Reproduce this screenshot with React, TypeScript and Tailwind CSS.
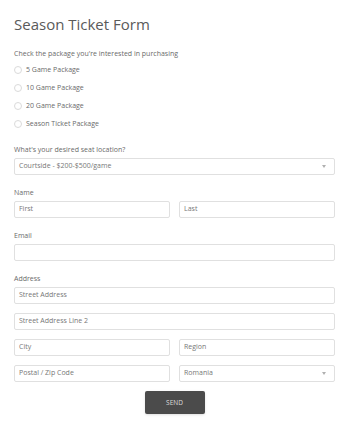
import React from 'react';

const font = { fontFamily: '"Open Sans", "Liberation Sans", sans-serif' };

const Field = ({ placeholder, className = '' }: { placeholder: string; className?: string }) => (
  <div
    className={`h-[17px] border border-[#e0e0e0] rounded-[2px] bg-white flex items-center px-[4px] text-[7px] text-[#777] ${className}`}
  >
    {placeholder}
  </div>
);

const Select = ({ value, className = '' }: { value: string; className?: string }) => (
  <div
    className={`h-[17px] border border-[#e0e0e0] rounded-[2px] bg-white flex items-center justify-between pl-[4px] pr-[8px] text-[7px] text-[#777] ${className}`}
  >
    <span>{value}</span>
    <span className="w-0 h-0 border-l-[2.5px] border-r-[2.5px] border-t-[3px] border-l-transparent border-r-transparent border-t-[#b0b0b0]" />
  </div>
);

const Label = ({ children }: { children: React.ReactNode }) => (
  <div className="h-[10px] leading-[10px] text-[7px] text-[#6a6a6a] mb-[3px]">{children}</div>
);

const packages = ['5 Game Package', '10 Game Package', '20 Game Package', 'Season Ticket Package'];

export default function App() {
  return (
    <div style={font} className="w-[350px] h-[427px] bg-white pl-[14px] pr-[15px] pt-[14px]">
      <h1 className="text-[15px] leading-[20px] text-[#5a5a5a] font-normal">Season Ticket Form</h1>

      <div className="mt-[15px] h-[10px] leading-[10px] text-[7px] text-[#6a6a6a]">
        Check the package you're interested in purchasing
      </div>
      <div className="mt-[2px] flex flex-col">
        {packages.map((p) => (
          <div key={p} className="h-[18px] flex items-center gap-[4px]">
            <span className="w-[8px] h-[8px] rounded-full border border-[#dadada] bg-white" />
            <span className="text-[7px] text-[#6a6a6a]">{p}</span>
          </div>
        ))}
      </div>

      <div className="mt-[12px]">
        <Label>What's your desired seat location?</Label>
        <Select value="Courtside - $200-$500/game" />
      </div>

      <div className="mt-[13px]">
        <Label>Name</Label>
        <div className="grid grid-cols-2 gap-[9px]">
          <Field placeholder="First" />
          <Field placeholder="Last" />
        </div>
      </div>

      <div className="mt-[13px]">
        <Label>Email</Label>
        <Field placeholder="" />
      </div>

      <div className="mt-[13px] flex flex-col gap-[9px]">
        <div>
          <Label>Address</Label>
          <Field placeholder="Street Address" />
        </div>
        <Field placeholder="Street Address Line 2" />
        <div className="grid grid-cols-2 gap-[9px]">
          <Field placeholder="City" />
          <Field placeholder="Region" />
        </div>
        <div className="grid grid-cols-2 gap-[9px]">
          <Field placeholder="Postal / Zip Code" />
          <Select value="Romania" />
        </div>
      </div>

      <div className="mt-[9px] flex justify-center">
        <button className="w-[60px] h-[23px] bg-[#4b4b4b] text-[#ddd] text-[6.5px] rounded-[2px] shadow-sm">
          SEND
        </button>
      </div>
    </div>
  );
}
